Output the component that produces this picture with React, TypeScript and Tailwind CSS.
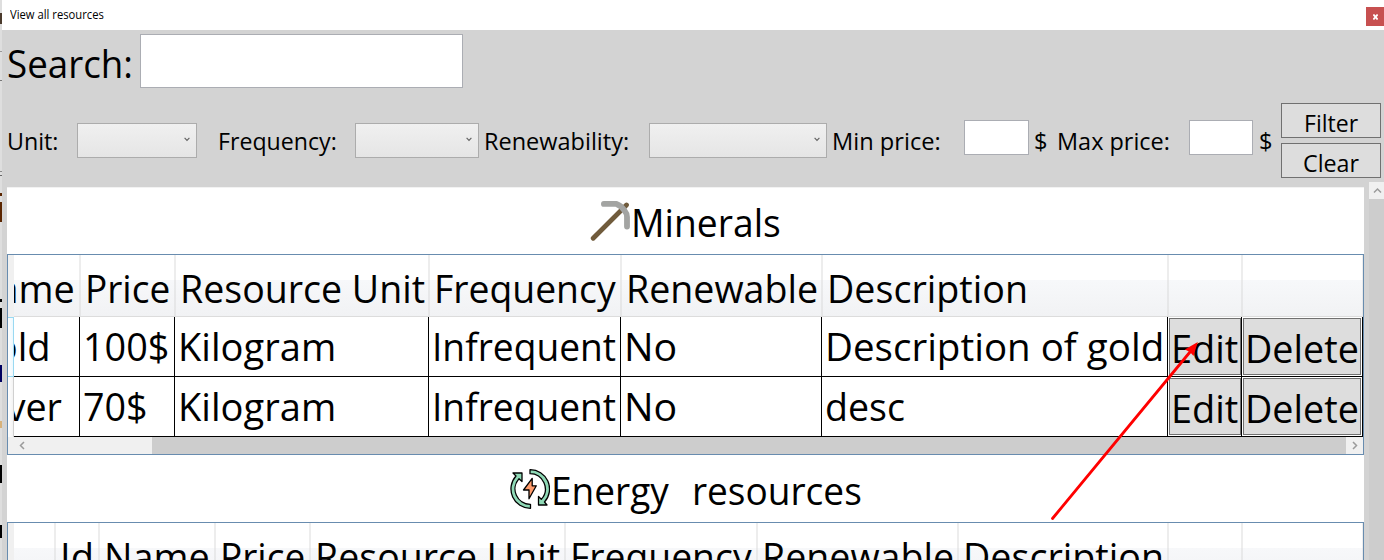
import { useLayoutEffect, useRef, useState } from "react";
import type { ReactNode } from "react";

const advances: Record<string, number> = {
  S: 1087, e: 1071, a: 1042, r: 711, c: 946, h: 1157, ":": 444, " ": 561, M: 1839, i: 496, n: 1157,
  l: 496, s: 869, P: 1147, R: 1225, o: 1200, u: 1157, U: 1407, t: 694, F: 999, q: 1204, y: 991,
  w: 1481, N: 1532, b: 1204, D: 1436, p: 1204, K: 1188, g: 1204, m: 1767, I: 545, f: 641, d: 1204,
  v: 981, E: 1036, "0": 1104, "1": 1104, "7": 1104, $: 1104, C: 1268, x: 940, V: 1271, G: 1405,
};

/* Text set to the narrow advance widths of the desktop UI face. */
function Label({ text, em = 40, className = "" }: { text: string; em?: number; className?: string }) {
  const ref = useRef<HTMLSpanElement>(null);
  const [scale, setScale] = useState(1);
  const width = ([...text].reduce((sum, ch) => sum + (advances[ch] ?? 1100), 0) * em) / 2048;
  useLayoutEffect(() => {
    if (ref.current) setScale(width / ref.current.offsetWidth);
  }, [width]);
  return (
    <span className={`block shrink-0 whitespace-pre ${className}`} style={{ width }}>
      <span ref={ref} className="inline-block origin-left whitespace-pre" style={{ transform: `scaleX(${scale})` }}>
        {text}
      </span>
    </span>
  );
}

function Combo({ className }: { className: string }) {
  return (
    <div className={`flex h-[35px] shrink-0 justify-end border border-[#acacac] bg-linear-to-b from-[#f0f0f0] to-[#e5e5e5] pt-[13px] pr-[6px] ${className}`}>
      <svg width="6" height="5" viewBox="0 0 6 5" fill="none" stroke="#606060" strokeWidth="1.1">
        <path d="M0.6 0.8 3 3.4 5.4 0.8" />
      </svg>
    </div>
  );
}

function Field({ className }: { className: string }) {
  return <input className={`block shrink-0 border border-[#abadb3] bg-white outline-none ${className}`} />;
}

const button = "flex shrink-0 justify-center border border-[#707070] bg-[#dddddd]";

type Column = { title: string; width: string };

function HeaderRow({ columns, shift = "" }: { columns: Column[]; shift?: string }) {
  return (
    <div className="flex h-[62px] shrink-0">
      <div className="w-[6px] shrink-0 bg-[#f0f0f0]" />
      <div className="flex min-w-0 flex-1 overflow-hidden border-b border-[#dcdcdc] bg-[linear-gradient(to_bottom,#ffffff_25px,#f7f8fa_25px,#f1f2f4_61px)]">
        <div className={`flex shrink-0 ${shift}`}>
          {columns.map((c, i) => (
            <div key={i} className={`flex shrink-0 ${c.width}`}>
              <div className="min-w-0 flex-1 pl-[5px] leading-[66px]">
                <Label text={c.title} />
              </div>
              <div className="w-[2px] shrink-0 translate-x-px bg-[#d8d8d8]/45" />
            </div>
          ))}
        </div>
      </div>
    </div>
  );
}

const cell = "shrink-0 border-r border-black pl-[3px] leading-[58px]";

function DataRow({ values, selected }: { values: string[]; selected?: boolean }) {
  return (
    <div className="flex h-[60px] shrink-0">
      <div className={`w-[6px] shrink-0 ${selected ? "border border-l-0 border-[#99d9f2] bg-linear-to-r from-white to-[#eef8fd]" : "border-r border-[#d0d0d0] bg-linear-to-r from-white to-[#f3f3f3]"}`} />
      <div className="flex min-w-0 flex-1 overflow-hidden border-b border-black">
        <div className="-ml-[50px] flex shrink-0">
          {values.map((v, i) => (
            <div key={i} className={`${cell} ${mineralColumns[i].width}`}>
              <Label text={v} />
            </div>
          ))}
          <div className="w-[74px] shrink-0 border-r border-black p-px">
            <div className={`${button} h-[57px] w-[72px] pr-[2px] leading-[57px]`}><Label text="Edit" /></div>
          </div>
          <div className="w-[121px] shrink-0 border-r border-black p-px">
            <div className={`${button} h-[57px] w-[118px] leading-[57px]`}><Label text="Delete" /></div>
          </div>
        </div>
      </div>
    </div>
  );
}

const mineralColumns: Column[] = [
  { title: "Name", width: "w-[116px]" },
  { title: "Price", width: "w-[95px]" },
  { title: "Resource Unit", width: "w-[254px]" },
  { title: "Frequency", width: "w-[192px]" },
  { title: "Renewable", width: "w-[201px]" },
  { title: "Description", width: "w-[346px]" },
  { title: "", width: "w-[74px]" },
  { title: "", width: "w-[121px]" },
];

const energyColumns: Column[] = [
  { title: "", width: "w-[41px]" },
  { title: "Id", width: "w-[44px]" },
  { title: "Name", width: "w-[116px]" },
  { title: "Price", width: "w-[95px]" },
  { title: "Resource Unit", width: "w-[255px]" },
  { title: "Frequency", width: "w-[192px]" },
  { title: "Renewable", width: "w-[201px]" },
  { title: "Description", width: "w-[210px]" },
  { title: "", width: "w-[74px]" },
  { title: "", width: "w-[121px]" },
];

function Heading({ icon, text, className }: { icon: ReactNode; text: string; className: string }) {
  return (
    <div className={`flex shrink-0 justify-center ${className}`}>
      {icon}
      <Label text={text} className="pl-px" />
    </div>
  );
}

function Pickaxe() {
  return (
    <svg className="mt-[13px]" width="40" height="40" viewBox="0 0 40 40" fill="none" strokeLinecap="round" strokeLinejoin="round">
      <path d="M3.200 37.200 36.500 4" stroke="#705b3c" strokeWidth="4.800" />
      <path d="M13.900 2.900H26.500Q31 4.500 34.500 9.500Q37 12.500 37 16V25.500" stroke="#a3a4a2" strokeWidth="5.800" />
    </svg>
  );
}

function EnergyCycle() {
  return (
    <svg className="mt-[14px]" width="40" height="40" viewBox="0 0 40 40" fill="none" stroke="#000" strokeWidth="1.300" strokeLinejoin="round">
      <path d="M20 .7A19.300 19.300 0 0 1 34.500 33L37 36H28.500V27.500L31.300 30.300A15.300 15.300 0 0 0 20 4.700Z" fill="#8fd9b6" />
      <path d="M20.500 39.300A19.300 19.300 0 0 1 6 7L3 4H12V12.500L9 9.700A15.300 15.300 0 0 0 20.500 35.300Z" fill="#8fd9b6" />
      <path d="M22.200 9.300 13.500 21H19V29.800L26.300 16.800H22.200Z" fill="#ff9b6b" />
    </svg>
  );
}

function ChevronIcon({ d, className = "" }: { d: string; className?: string }) {
  return (
    <svg className={className} width="9" height="9" viewBox="0 0 9 9" fill="none" stroke="#9b9b9b" strokeWidth="1.5">
      <path d={d} />
    </svg>
  );
}

export default function App() {
  return (
    <div className="relative flex h-[560px] w-[1384px] overflow-hidden bg-[#d3d3d3] font-['Open_Sans','Noto_Sans',sans-serif] text-[39px] text-black">
      <div className="flex w-[2px] shrink-0 flex-col bg-[#dedede]">
        <div className="mt-[13px] h-[11px] bg-[#4a3a2c]" />
        <div className="mt-[27px] h-px bg-[#999]" />
        <div className="mt-[28px] h-px bg-[#777]" />
        <div className="mt-[90px] h-px bg-[#888]" />
        <div className="mt-[3px] h-px bg-[#666]" />
        <div className="mt-[17px] h-[3px] bg-[#5a2500]" />
        <div className="mt-[6px] h-[20px] bg-[#5a2500]" />
        <div className="mt-[77px] h-[3px] bg-black" />
        <div className="mt-[6px] h-[20px] bg-black" />
        <div className="mt-[37px] h-[17px] bg-[#000060]" />
        <div className="mt-[39px] h-[7px] bg-[#d8b27a]" />
        <div className="mt-[37px] h-[18px] bg-black" />
        <div className="mt-[42px] h-[13px] bg-black" />
      </div>

      <main className="flex w-[1382px] shrink-0 flex-col">
        <header className="flex h-[30px] shrink-0 justify-between bg-white">
          <Label text="View all resources" em={12} className="pl-[8px] text-[11.7px] leading-[29px]" />
          <div className="mt-[7px] flex h-[19px] w-[18px] items-center justify-center bg-[#c75050]">
            <svg width="5" height="6" viewBox="0 0 5 6" stroke="#fff" strokeWidth="1.800">
              <path d="M.4.5 4.600 5.500M4.600.5.4 5.500" />
            </svg>
          </div>
        </header>

        <div className="flex h-[65px] shrink-0 pt-[4px] pl-[5px]">
          <Label text="Search:" className="leading-[58px]" />
          <Field className="ml-[7px] h-[54px] w-[323px]" />
        </div>

        <div className="flex h-[87px] shrink-0 pl-[5px] text-[24.5px] leading-[91px]">
          <Label text="Unit:" em={25} />
          <Combo className="mt-[28px] ml-[19px] w-[120px]" />
          <Label text="Frequency:" em={25} className="ml-[21px]" />
          <Combo className="mt-[28px] ml-[18px] w-[124px]" />
          <Label text="Renewability:" em={25} className="ml-[5px]" />
          <Combo className="mt-[28px] ml-[20px] w-[178px]" />
          <Label text="Min price:" em={25} className="ml-[5px]" />
          <Field className="mt-[25px] ml-[23px] h-[35px] w-[65px]" />
          <Label text="$" em={25} className="ml-[5px]" />
          <Label text="Max price:" em={25} className="ml-[9px]" />
          <Field className="mt-[25px] ml-[20px] h-[35px] w-[64px]" />
          <Label text="$" em={25} className="ml-[6px]" />
          <div className="mt-[8px] ml-auto flex w-[103px] shrink-0 flex-col gap-[5px] leading-[37px]">
            <div className={`${button} h-[35px] w-[100px]`}><Label text="Filter" em={25} /></div>
            <div className={`${button} h-[35px] w-[100px]`}><Label text="Clear" em={25} /></div>
          </div>
        </div>

        <div className="flex h-[378px] shrink-0 justify-between">
          <section className="mt-[5px] ml-[5px] flex h-[373px] w-[1357px] flex-col overflow-hidden border-t border-[#f2f2f2] bg-white">
            <Heading icon={<Pickaxe />} text="Minerals" className="h-[66px] leading-[68px]" />
            <div className="flex h-[201px] shrink-0 flex-col border border-[#688caf]">
              <HeaderRow columns={mineralColumns} shift="-ml-[50px]" />
              <DataRow values={["Gold", "100$", "Kilogram", "Infrequent", "No", "Description of gold"]} selected />
              <DataRow values={["Silver", "70$", "Kilogram", "Infrequent", "No", "desc"]} />
              <div className="flex h-[17px] shrink-0 items-center bg-[#f0f0f0]">
                <ChevronIcon d="M6 1 2.500 4.500 6 8" className="ml-[10px]" />
                <div className="ml-auto h-full w-[1194px] bg-[#cdcdcd]" />
                <div className="flex w-[17px] justify-center"><ChevronIcon d="M3 1 6.500 4.500 3 8" /></div>
              </div>
            </div>
            <Heading icon={<EnergyCycle />} text="Energy  resources" className="h-[67px] leading-[70px] [word-spacing:2px]" />
            <div className="h-[200px] shrink-0 border border-[#688caf]">
              <HeaderRow columns={energyColumns} />
            </div>
          </section>
          <div className="flex w-[15px] shrink-0 flex-col bg-[#cdcdcd]">
            <div className="flex h-[17px] items-center justify-center bg-[#f0f0f0] pl-[2px]">
              <ChevronIcon d="M1 6.500 4.500 3 8 6.500" />
            </div>
          </div>
        </div>
      </main>

      <svg className="pointer-events-none absolute top-[330px] left-[1040px]" width="170" height="200" viewBox="1040 330 170 200">
        <path d="M1052.500 518.500 1190 352" stroke="#f00" strokeWidth="2.800" strokeLinecap="round" />
        <path d="M1197.800 342 1193.500 356 1190 352 1184.800 349.500Z" fill="#f00" />
      </svg>
    </div>
  );
}
